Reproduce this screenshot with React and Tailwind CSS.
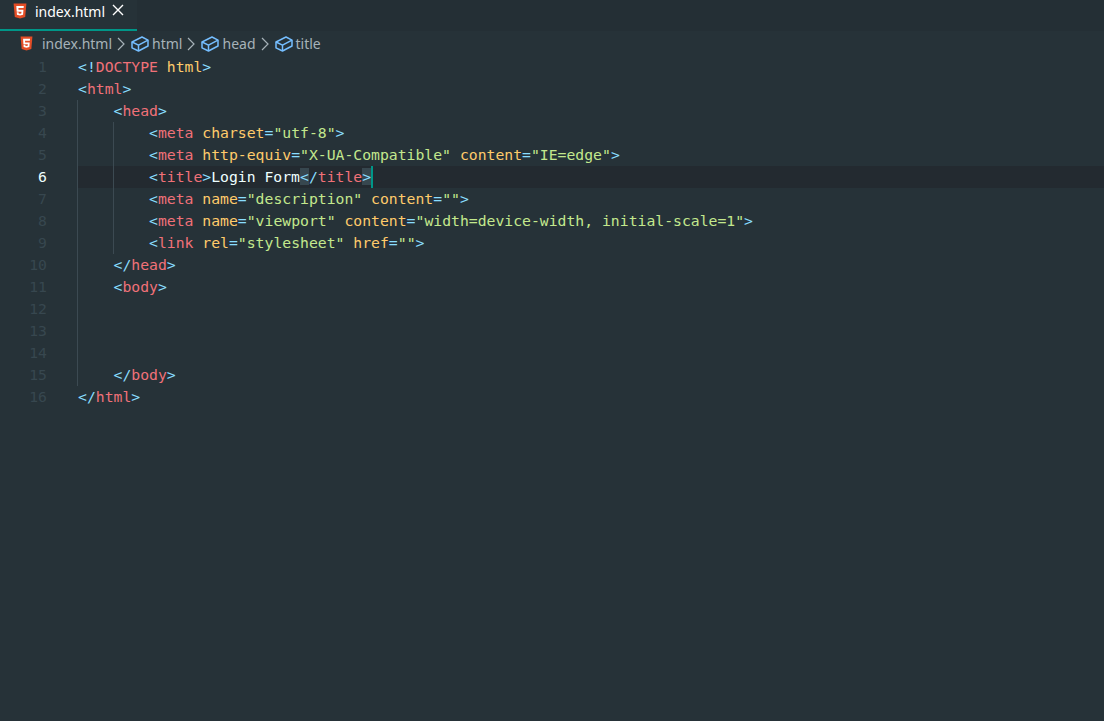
const T = ({ c, children }) => {
  const cls = {
    b: "text-[#89ddff]",
    r: "text-[#f07178]",
    y: "text-[#ffcb6b]",
    g: "text-[#c3e88d]",
    w: "text-[#eeffff]",
  }[c];
  return <span className={cls}>{children}</span>;
};

const Html5 = ({ className }) => (
  <svg viewBox="0 0 14 16" className={className}>
    <path d="M0.6 0.4H13.4L12.2 14L7 15.6L1.8 14Z" fill="#e44d26" />
    <path d="M3.3 3H10.8L10.6 5H5.4L5.55 6.8H10.45L10.05 11.7L7 12.6L3.95 11.7L3.75 9.3H5.6L5.7 10.4L7 10.8L8.3 10.4L8.45 8.7H3.7Z" fill="#fff" />
  </svg>
);

const Cube = () => (
  <svg viewBox="0 0 18 16" className="w-[18px] h-[16px] shrink-0" fill="none" stroke="#75beff" strokeWidth="1.5" strokeLinejoin="round">
    <path d="M11 1L17 4.2V10L7.5 15L1 11.8V6Z" />
    <path d="M1 6L7.5 9.2L17 4.2" />
    <path d="M7.5 9.2V15" />
  </svg>
);

const Chevron = () => (
  <svg viewBox="0 0 8 14" className="w-[8px] h-[14px] shrink-0" fill="none" stroke="#a6b2b8" strokeWidth="1.2">
    <path d="M1 1L7 7L1 13" />
  </svg>
);

const Crumb = ({ children }) => (
  <div className="flex items-center gap-[3px] ml-px">
    <Cube />
    <span>{children}</span>
  </div>
);

const lines = [
  { guides: 0, code: <><T c="b">&lt;!</T><T c="r">DOCTYPE</T> <T c="y">html</T><T c="b">&gt;</T></> },
  { guides: 0, code: <><T c="b">&lt;</T><T c="r">html</T><T c="b">&gt;</T></> },
  { guides: 1, code: <><T c="b">&lt;</T><T c="r">head</T><T c="b">&gt;</T></> },
  { guides: 2, code: <><T c="b">&lt;</T><T c="r">meta</T> <T c="y">charset</T><T c="b">=</T><T c="g">"utf-8"</T><T c="b">&gt;</T></> },
  { guides: 2, code: <><T c="b">&lt;</T><T c="r">meta</T> <T c="y">http-equiv</T><T c="b">=</T><T c="g">"X-UA-Compatible"</T> <T c="y">content</T><T c="b">=</T><T c="g">"IE=edge"</T><T c="b">&gt;</T></> },
  {
    guides: 2,
    active: true,
    code: (
      <>
        <T c="b">&lt;</T><T c="r">title</T><T c="b">&gt;</T><T c="w">Login Form</T>
        <span className="bg-[#37474f] text-[#89ddff]">&lt;</span>
        <T c="b">/</T><T c="r">title</T>
        <span className="bg-[#37474f] text-[#89ddff]">&gt;</span>
        <span className="inline-block w-[2px] h-[22px] align-top bg-[#009688]" />
      </>
    ),
  },
  { guides: 2, code: <><T c="b">&lt;</T><T c="r">meta</T> <T c="y">name</T><T c="b">=</T><T c="g">"description"</T> <T c="y">content</T><T c="b">=</T><T c="g">""</T><T c="b">&gt;</T></> },
  { guides: 2, code: <><T c="b">&lt;</T><T c="r">meta</T> <T c="y">name</T><T c="b">=</T><T c="g">"viewport"</T> <T c="y">content</T><T c="b">=</T><T c="g">"width=device-width, initial-scale=1"</T><T c="b">&gt;</T></> },
  { guides: 2, code: <><T c="b">&lt;</T><T c="r">link</T> <T c="y">rel</T><T c="b">=</T><T c="g">"stylesheet"</T> <T c="y">href</T><T c="b">=</T><T c="g">""</T><T c="b">&gt;</T></> },
  { guides: 1, code: <><T c="b">&lt;/</T><T c="r">head</T><T c="b">&gt;</T></> },
  { guides: 1, code: <><T c="b">&lt;</T><T c="r">body</T><T c="b">&gt;</T></> },
  { guides: 1, code: null },
  { guides: 1, code: null },
  { guides: 1, code: null },
  { guides: 1, code: <><T c="b">&lt;/</T><T c="r">body</T><T c="b">&gt;</T></> },
  { guides: 0, code: <><T c="b">&lt;/</T><T c="r">html</T><T c="b">&gt;</T></> },
];

export default function App() {
  return (
    <div className="w-[1104px] h-[721px] overflow-hidden bg-[#263238] flex flex-col font-['Noto_Sans',sans-serif]">
      <div className="h-[31px] shrink-0 flex bg-[#242f35]">
        <div className="w-[137px] h-[31px] border-b-2 border-[#009688] bg-[#263238] flex items-start pt-[3px] pl-[13px] text-white text-[14px] leading-[16px]">
          <Html5 className="w-[14px] h-[16px] shrink-0 mr-[8px]" />
          <span className="mt-px">index.html</span>
          <svg viewBox="0 0 12 12" className="w-[12px] h-[12px] ml-[7px] mt-[1px]" fill="none" stroke="#fff" strokeWidth="1.4">
            <path d="M1 1L11 11M11 1L1 11" />
          </svg>
        </div>
      </div>
      <div className="h-[25px] shrink-0 flex items-center pl-[20px] text-[14px] text-[#a6b2b8] gap-[5px]">
        <Html5 className="w-[13px] h-[15px] shrink-0 mr-[4px]" />
        <span>index.html</span>
        <Chevron />
        <Crumb>html</Crumb>
        <Chevron />
        <Crumb>head</Crumb>
        <Chevron />
        <Crumb>title</Crumb>
      </div>
      <div className="flex flex-col font-['DejaVu_Sans_Mono',monospace] text-[14.75px] leading-[22px] whitespace-pre">
        {lines.map((line, i) => (
          <div key={i} className="flex h-[22px]">
            <div className={`w-[47px] shrink-0 text-right ${line.active ? "text-[#eeffff]" : "text-[#37474f]"}`}>{i + 1}</div>
            <div className="w-[30px] shrink-0" />
            <div className={`flex-1 flex ${line.active ? "bg-[#232a30]" : ""}`}>
              {line.guides > 0 && <div className="w-[35.5px] h-[22px] shrink-0 border-l border-[#3c4a52]" />}
              {line.guides > 1 && <div className="w-[35.5px] h-[22px] shrink-0 border-l border-[#3c4a52]" />}
              <div className="pl-px">{line.code}</div>
            </div>
          </div>
        ))}
      </div>
    </div>
  );
}
